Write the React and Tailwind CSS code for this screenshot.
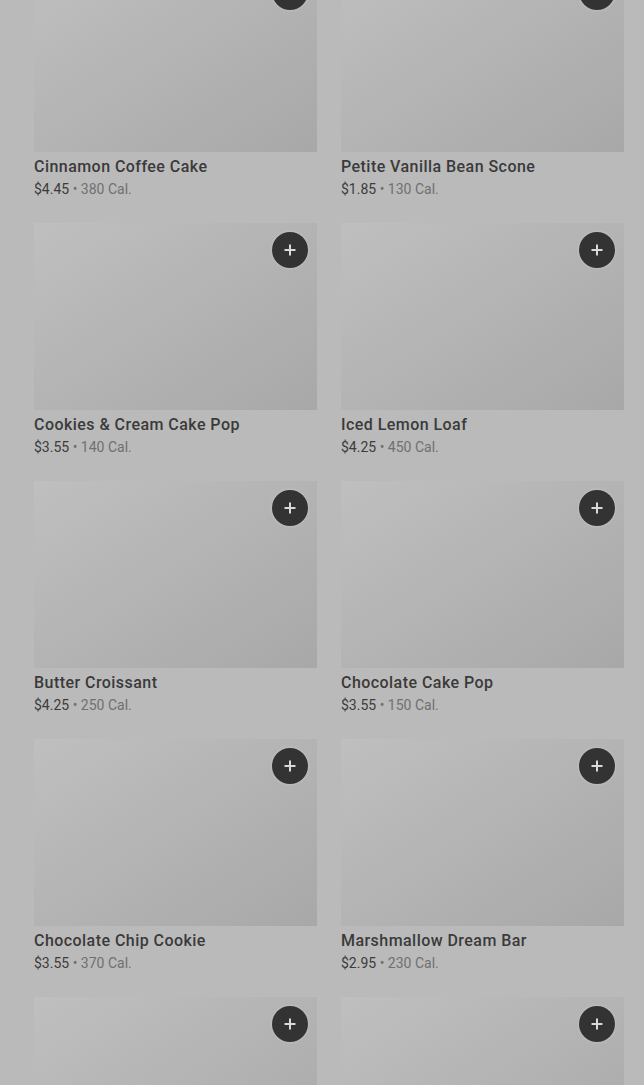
import React from "react";

const items = [
  ["Cinnamon Coffee Cake", "$4.45", "380 Cal."],
  ["Petite Vanilla Bean Scone", "$1.85", "130 Cal."],
  ["Cookies & Cream Cake Pop", "$3.55", "140 Cal."],
  ["Iced Lemon Loaf", "$4.25", "450 Cal."],
  ["Butter Croissant", "$4.25", "250 Cal."],
  ["Chocolate Cake Pop", "$3.55", "150 Cal."],
  ["Chocolate Chip Cookie", "$3.55", "370 Cal."],
  ["Marshmallow Dream Bar", "$2.95", "230 Cal."],
  [null, null, null],
  [null, null, null],
];

function Card({ name, price, cal }) {
  return (
    <div className="flex flex-col">
      <div className="relative h-[187px] bg-gradient-to-br from-[#bfbfbf] to-[#a8a8a8]">
        <button className="absolute top-[9px] right-[9px] w-[36px] h-[36px] rounded-full bg-[#333333] flex items-center justify-center shadow-[0_0_3px_rgba(255,255,255,0.35)]">
          <svg width="14" height="14" viewBox="0 0 14 14">
            <path d="M7 1.5v11M1.5 7h11" stroke="#d9d9d9" strokeWidth="2" />
          </svg>
        </button>
      </div>
      {name && (
        <>
          <div className="mt-[5px] text-[16px] leading-[20px] text-[#3a3a3a] font-medium tracking-[0.45px]">{name}</div>
          <div className="mt-[3px] text-[14px] leading-[18px]">
            <span className="text-[#3c3c3c]">{price}</span>
            <span className="text-[#707070]"> • {cal}</span>
          </div>
        </>
      )}
    </div>
  );
}

export default function App() {
  return (
    <div className="w-[644px] h-[1085px] overflow-hidden bg-[#bababa]" style={{ fontFamily: "Roboto, 'Liberation Sans', sans-serif" }}>
      <div className="mt-[-35px] pl-[34px] pr-[20px] grid grid-cols-2 gap-x-[24px] gap-y-[25px]">
        {items.map((it, i) => (
          <Card key={i} name={it[0]} price={it[1]} cal={it[2]} />
        ))}
      </div>
    </div>
  );
}
